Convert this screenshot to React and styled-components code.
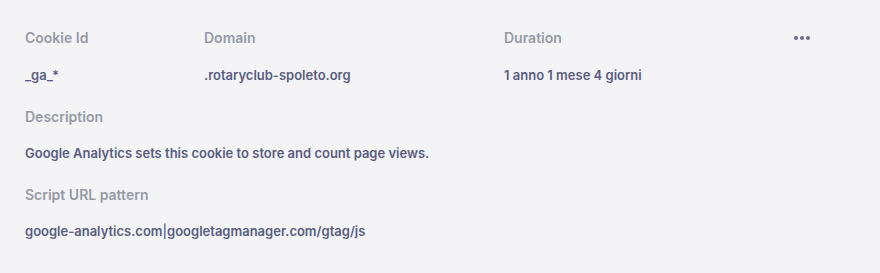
import React from "react";
import styled, { createGlobalStyle } from "styled-components";

const GlobalStyle = createGlobalStyle`
  html, body {
    margin: 0;
    padding: 0;
    background: #f4f4f7;
    font-family: Inter, "Noto Sans", sans-serif;
  }
`;

const Panel = styled.div`
  width: 880px;
  height: 273px;
  box-sizing: border-box;
  padding: 28px 0 0 25px;
  background: #f4f4f7;
`;

const Grid = styled.div`
  display: grid;
  grid-template-columns: 179px 300px 289px 40px;
  row-gap: 17px;
`;

const Section = styled.div`
  display: flex;
  flex-direction: column;
  gap: 16px;
  margin-top: 22px;
`;

const Label = styled.div`
  font-size: 14px;
  font-weight: 600;
  line-height: 20px;
  color: #959aa6;
`;

const Value = styled.div`
  font-size: 13px;
  font-weight: 600;
  line-height: 20px;
  color: #5a5d80;
  white-space: nowrap;
`;

const Pipe = styled.span`
  color: #4f5c92;
  font-weight: 500;
`;

const MoreButton = styled.button`
  border: 0;
  background: none;
  padding: 0;
  height: 20px;
  display: flex;
  align-items: center;
  justify-content: flex-start;
  cursor: pointer;
`;

function Dots() {
  return (
    <svg width="18" height="6" viewBox="0 0 18 6">
      <circle cx="3" cy="3" r="2" fill="#6a6d8c" />
      <circle cx="9" cy="3" r="2" fill="#6a6d8c" />
      <circle cx="15" cy="3" r="2" fill="#6a6d8c" />
    </svg>
  );
}

export default function App() {
  return (
    <>
      <GlobalStyle />
      <Panel>
        <Grid>
          <Label>Cookie Id</Label>
          <Label>Domain</Label>
          <Label>Duration</Label>
          <MoreButton aria-label="More">
            <Dots />
          </MoreButton>
          <Value>_ga_*</Value>
          <Value>.rotaryclub-spoleto.org</Value>
          <Value>1 anno 1 mese 4 giorni</Value>
          <div />
        </Grid>
        <Section>
          <Label>Description</Label>
          <Value>Google Analytics sets this cookie to store and count page views.</Value>
        </Section>
        <Section>
          <Label>Script URL pattern</Label>
          <Value>
            google-analytics.com<Pipe>|</Pipe>googletagmanager.com/gtag/js
          </Value>
        </Section>
      </Panel>
    </>
  );
}
